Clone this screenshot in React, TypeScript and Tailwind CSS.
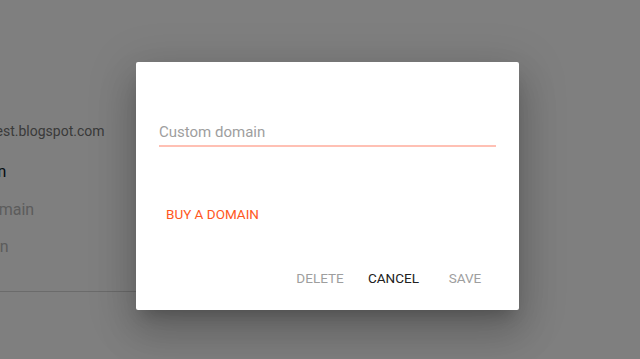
const font = { fontFamily: "Roboto, 'Liberation Sans', sans-serif" };

function SettingsPage() {
  return (
    <div className="relative h-[359px] w-[640px] overflow-hidden bg-white" style={font}>
      <div className="flex flex-col pt-[121px]">
        <div className="h-5 text-[14px] leading-5 text-[#757575] ml-[-9px] whitespace-nowrap">test.blogspot.com</div>
        <div className="mt-[21px] h-5 text-[16px] leading-5 text-[#0d1a2a] ml-[-107px] whitespace-nowrap">Custom domain</div>
        <div className="mt-[18px] h-5 text-[16px] leading-5 text-[#b8b8b8] ml-[-82px] whitespace-nowrap">Redirect domain</div>
        <div className="mt-[17px] h-5 text-[16px] leading-5 text-[#b8b8b8] ml-[-88px] whitespace-nowrap">Buy a domain</div>
        <div className="mt-[34px] h-px w-[420px] bg-[#d6d6d6]" />
      </div>
    </div>
  );
}

function DomainDialog() {
  return (
    <div
      className="flex h-[248px] w-[383px] flex-col rounded-[2px] bg-white shadow-[0_11px_15px_-7px_rgba(0,0,0,0.2),0_24px_38px_3px_rgba(0,0,0,0.14),0_9px_46px_8px_rgba(0,0,0,0.12)]"
      style={font}
    >
      <div className="px-[23px] pt-[60px]">
        <input
          placeholder="Custom domain"
          className="block h-[25px] w-full border-b-2 border-[#ffc0b4] pb-[3px] text-[15px] leading-5 text-[#212121] outline-none placeholder:text-[#9e9e9e]"
        />
      </div>
      <div className="mt-[49px] flex px-[23px]">
        <button className="h-9 px-[7px] text-[13.5px] font-normal text-[#ff5722]">BUY A DOMAIN</button>
      </div>
      <div className="mt-auto mb-[14px] flex justify-end pr-[22px]">
        <button className="mr-2 h-9 min-w-[64px] px-2 text-[13.5px] font-normal text-[#9e9e9e]">DELETE</button>
        <button className="h-9 min-w-[64px] px-2 text-[13.5px] font-normal text-[#212121]">CANCEL</button>
        <button className="ml-[6px] h-9 min-w-[64px] px-2 text-[13.5px] font-normal text-[#9e9e9e]">SAVE</button>
      </div>
    </div>
  );
}

export default function App() {
  return (
    <div className="relative h-[359px] w-[640px] overflow-hidden">
      <SettingsPage />
      {/* scrim over the page */}
      <div className="absolute inset-0 bg-black/50 pl-[136px] pt-[62px]">
        <DomainDialog />
      </div>
    </div>
  );
}
